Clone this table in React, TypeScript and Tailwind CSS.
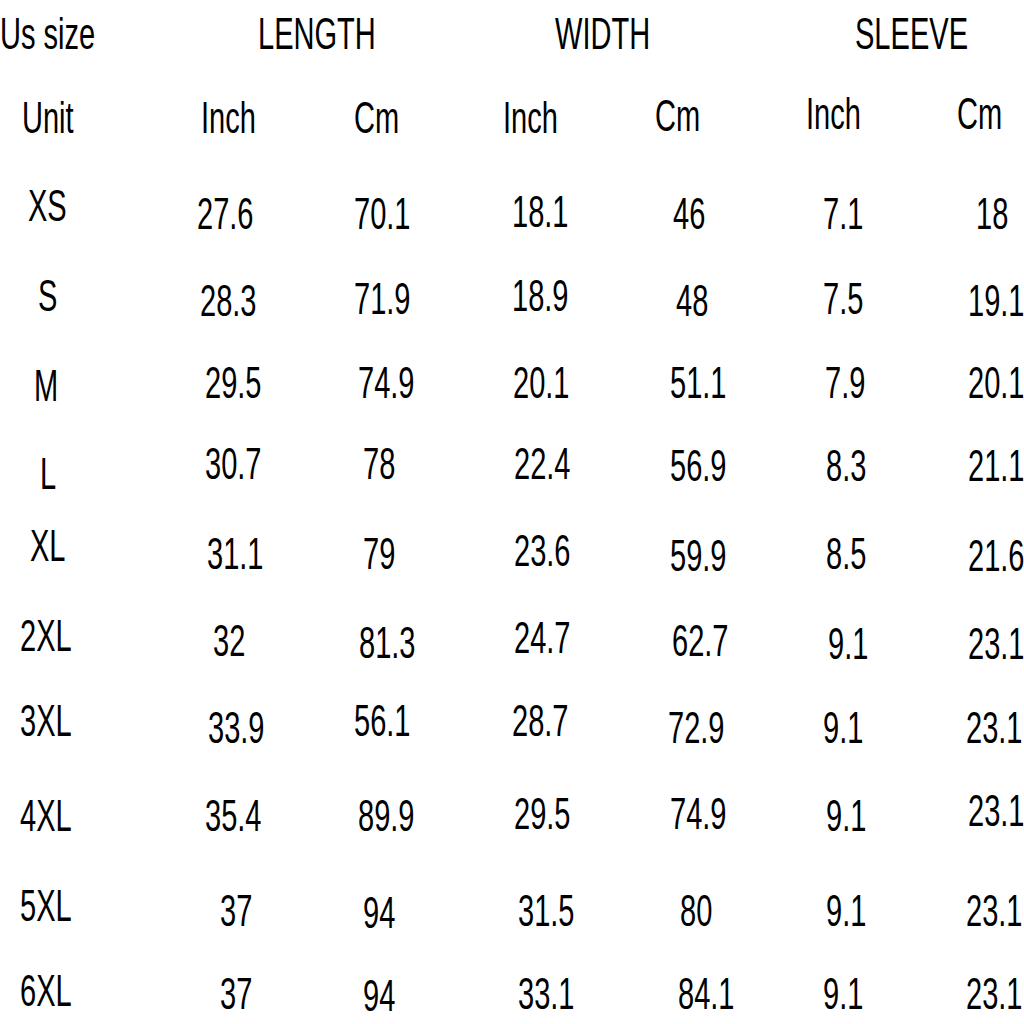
const colWidths = [
  'w-[150px]',
  'w-[180px]',
  'w-[150px]',
  'w-[150px]',
  'w-[150px]',
  'w-[150px]',
  'w-[94px]',
];

// each cell: [text, offset classes]
const rows: { h: string; cells: [string, string][] }[] = [
  {
    h: 'h-[85px]',
    cells: [
      ['Unit', 'pl-[22px] pt-[11px]'],
      ['Inch', 'pl-[51px] pt-[11px]'],
      ['Cm', 'pl-[24px] pt-[11px]'],
      ['Inch', 'pl-[23px] pt-[11px]'],
      ['Cm', 'pl-[25px] pt-[9px]'],
      ['Inch', 'pl-[26px] pt-[7px]'],
      ['Cm', 'pl-[27px] pt-[7px]'],
    ],
  },
  {
    h: 'h-[85px]',
    cells: [
      ['XS', 'pl-[28px] pt-[14px]'],
      ['27.6', 'pl-[47px] pt-[22px]'],
      ['70.1', 'pl-[24px] pt-[22px]'],
      ['18.1', 'pl-[32px] pt-[20px]'],
      ['46', 'pl-[43px] pt-[22px]'],
      ['7.1', 'pl-[43px] pt-[22px]'],
      ['18', 'pl-[46px] pt-[22px]'],
    ],
  },
  {
    h: 'h-[90px]',
    cells: [
      ['S', 'pl-[38px] pt-[19px]'],
      ['28.3', 'pl-[50px] pt-[24px]'],
      ['71.9', 'pl-[24px] pt-[22px]'],
      ['18.9', 'pl-[32px] pt-[19px]'],
      ['48', 'pl-[46px] pt-[24px]'],
      ['7.5', 'pl-[43px] pt-[22px]'],
      ['19.1', 'pl-[38px] pt-[24px]'],
    ],
  },
  {
    h: 'h-[85px]',
    cells: [
      ['M', 'pl-[34px] pt-[19px]'],
      ['29.5', 'pl-[55px] pt-[16px]'],
      ['74.9', 'pl-[28px] pt-[16px]'],
      ['20.1', 'pl-[33px] pt-[16px]'],
      ['51.1', 'pl-[40px] pt-[16px]'],
      ['7.9', 'pl-[45px] pt-[16px]'],
      ['20.1', 'pl-[38px] pt-[16px]'],
    ],
  },
  {
    h: 'h-[85px]',
    cells: [
      ['L', 'pl-[40px] pt-[22px]'],
      ['30.7', 'pl-[55px] pt-[12px]'],
      ['78', 'pl-[33px] pt-[12px]'],
      ['22.4', 'pl-[34px] pt-[12px]'],
      ['56.9', 'pl-[40px] pt-[14px]'],
      ['8.3', 'pl-[46px] pt-[14px]'],
      ['21.1', 'pl-[38px] pt-[14px]'],
    ],
  },
  {
    h: 'h-[85px]',
    cells: [
      ['XL', 'pl-[30px] pt-[9px]'],
      ['31.1', 'pl-[57px] pt-[17px]'],
      ['79', 'pl-[33px] pt-[17px]'],
      ['23.6', 'pl-[34px] pt-[14px]'],
      ['59.9', 'pl-[40px] pt-[19px]'],
      ['8.5', 'pl-[46px] pt-[17px]'],
      ['21.6', 'pl-[38px] pt-[19px]'],
    ],
  },
  {
    h: 'h-[90px]',
    cells: [
      ['2XL', 'pl-[20px] pt-[14px]'],
      ['32', 'pl-[63px] pt-[19px]'],
      ['81.3', 'pl-[29px] pt-[21px]'],
      ['24.7', 'pl-[34px] pt-[16px]'],
      ['62.7', 'pl-[42px] pt-[19px]'],
      ['9.1', 'pl-[48px] pt-[22px]'],
      ['23.1', 'pl-[38px] pt-[22px]'],
    ],
  },
  {
    h: 'h-[85px]',
    cells: [
      ['3XL', 'pl-[20px] pt-[9px]'],
      ['33.9', 'pl-[58px] pt-[16px]'],
      ['56.1', 'pl-[24px] pt-[9px]'],
      ['28.7', 'pl-[32px] pt-[9px]'],
      ['72.9', 'pl-[38px] pt-[16px]'],
      ['9.1', 'pl-[43px] pt-[16px]'],
      ['23.1', 'pl-[36px] pt-[16px]'],
    ],
  },
  {
    h: 'h-[85px]',
    cells: [
      ['4XL', 'pl-[20px] pt-[19px]'],
      ['35.4', 'pl-[55px] pt-[19px]'],
      ['89.9', 'pl-[28px] pt-[19px]'],
      ['29.5', 'pl-[34px] pt-[17px]'],
      ['74.9', 'pl-[40px] pt-[17px]'],
      ['9.1', 'pl-[46px] pt-[19px]'],
      ['23.1', 'pl-[38px] pt-[14px]'],
    ],
  },
  {
    h: 'h-[90px]',
    cells: [
      ['5XL', 'pl-[20px] pt-[24px]'],
      ['37', 'pl-[70px] pt-[29px]'],
      ['94', 'pl-[33px] pt-[31px]'],
      ['31.5', 'pl-[38px] pt-[29px]'],
      ['80', 'pl-[50px] pt-[29px]'],
      ['9.1', 'pl-[46px] pt-[29px]'],
      ['23.1', 'pl-[36px] pt-[29px]'],
    ],
  },
  {
    h: 'h-[74px]',
    cells: [
      ['6XL', 'pl-[20px] pt-[19px]'],
      ['37', 'pl-[70px] pt-[22px]'],
      ['94', 'pl-[33px] pt-[24px]'],
      ['33.1', 'pl-[38px] pt-[22px]'],
      ['84.1', 'pl-[48px] pt-[22px]'],
      ['9.1', 'pl-[43px] pt-[22px]'],
      ['23.1', 'pl-[36px] pt-[22px]'],
    ],
  },
];

function Label({ children }: { children: string }) {
  return (
    <span className="inline-block origin-left scale-x-[0.66] whitespace-nowrap">
      {children}
    </span>
  );
}

export default function App() {
  return (
    <div className="w-[1024px] h-[1024px] overflow-hidden bg-white text-black font-['Liberation_Sans',Arial,sans-serif] text-[44px] leading-none">
      {/* header */}
      <div className="flex h-[85px]">
        <div className="w-[150px] pl-[0px] pt-[12px]">
          <Label>Us size</Label>
        </div>
        <div className="w-[330px] pl-[108px] pt-[12px]">
          <Label>LENGTH</Label>
        </div>
        <div className="w-[300px] pl-[75px] pt-[12px]">
          <Label>WIDTH</Label>
        </div>
        <div className="w-[244px] pl-[75px] pt-[12px]">
          <Label>SLEEVE</Label>
        </div>
      </div>

      {/* rows */}
      {rows.map((row, i) => (
        <div key={i} className={`flex ${row.h}`}>
          {row.cells.map(([text, pos], j) => (
            <div key={j} className={`shrink-0 ${colWidths[j]} ${pos}`}>
              <Label>{text}</Label>
            </div>
          ))}
        </div>
      ))}
    </div>
  );
}
